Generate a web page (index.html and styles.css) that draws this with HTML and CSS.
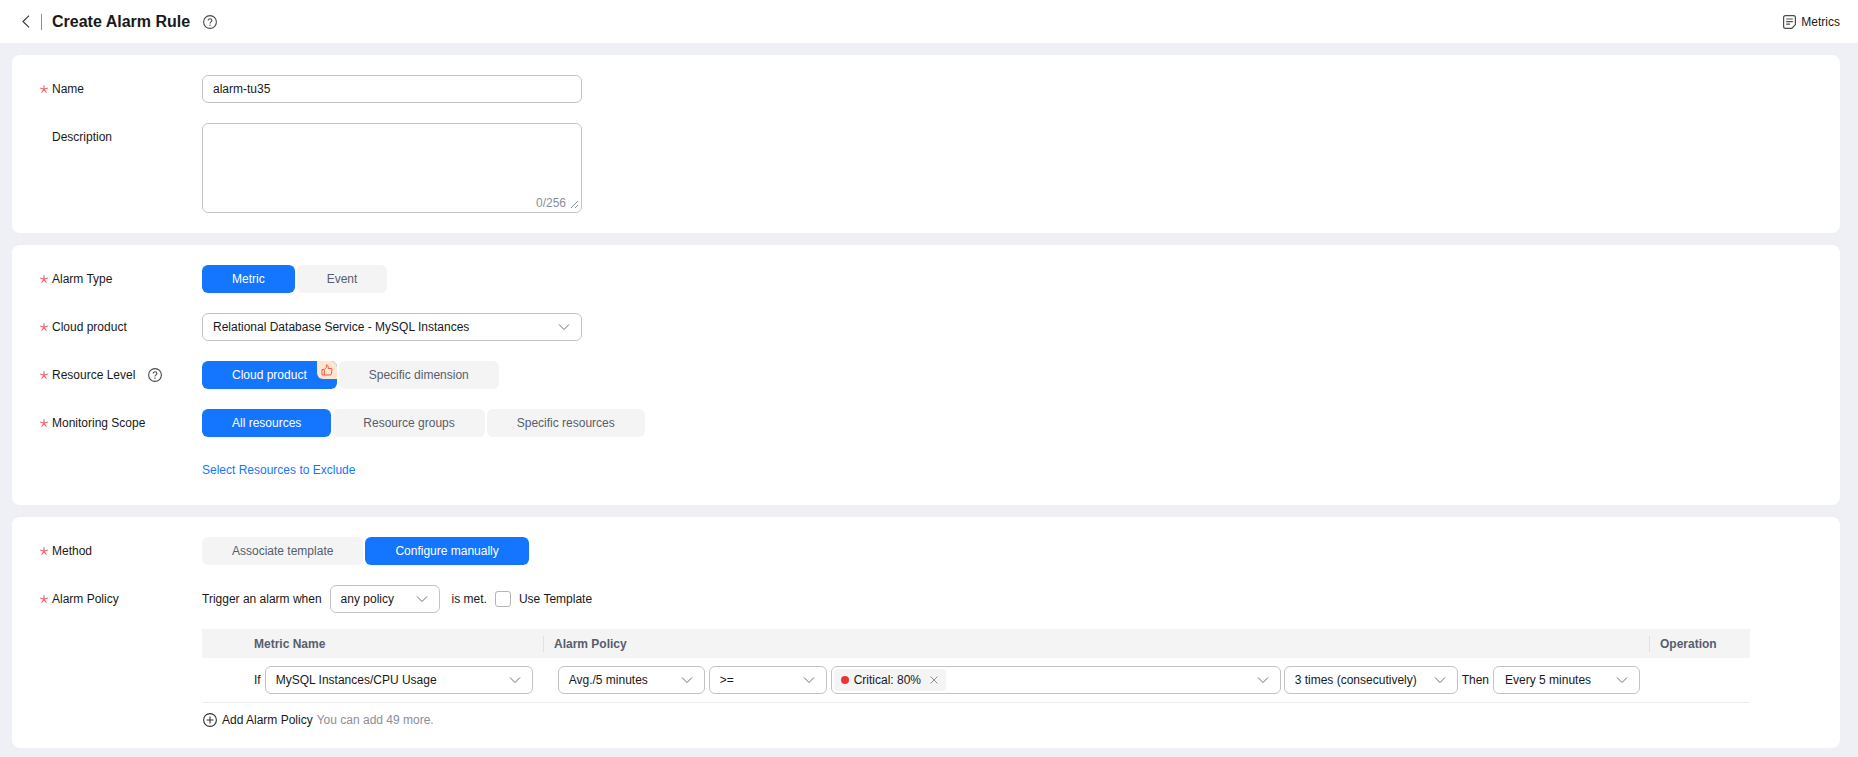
FILE: index.html
```html
<!DOCTYPE html>
<html lang="en">
<head>
    <meta charset="utf-8">
    <title>Create Alarm Rule</title>
    <link rel="stylesheet" href="styles.css">
</head>
<body>
    <svg class="defs" width="0" height="0">
        <symbol id="star" viewBox="0 0 8 8">
            <path d="M4 0.2V4.3M4 4.3L0.2 3.1M4 4.3L7.8 3.1M4 4.3L1.6 7.6M4 4.3L6.4 7.6" fill="none" stroke="currentColor" stroke-width="1.1"/>
        </symbol>
        <symbol id="chevron" viewBox="0 0 12 12">
            <path d="M1 3.5L6 8.5L11 3.5" fill="none" stroke="currentColor" stroke-width="1"/>
        </symbol>
        <symbol id="help" viewBox="0 0 14 14">
            <circle cx="7" cy="7" r="6.4" fill="none" stroke="currentColor" stroke-width="1.1"/>
            <path d="M5.1 5.6C5.1 4.5 5.9 3.8 7 3.8S8.9 4.5 8.9 5.5C8.9 6.9 7 6.9 7 8.5" fill="none" stroke="currentColor" stroke-width="1.1"/>
            <circle cx="7" cy="10.2" r="0.7" fill="currentColor"/>
        </symbol>
    </svg>

    <header class="topbar">
        <svg class="back" width="8" height="13" viewBox="0 0 8 13"><path d="M7 0.7L1 6.5L7 12.3" fill="none" stroke="currentColor" stroke-width="1.1"/></svg>
        <span class="topbar-line"></span>
        <h1>Create Alarm Rule</h1>
        <svg class="icon-help" width="14" height="14"><use href="#help"/></svg>
        <a class="metrics">
            <svg width="13" height="14" viewBox="0 0 13 14">
                <path d="M2.5 0.6H10.5A1.9 1.9 0 0 1 12.4 2.5V9.6L8.8 13.4H2.5A1.9 1.9 0 0 1 0.6 11.5V2.5A1.9 1.9 0 0 1 2.5 0.6Z" fill="none" stroke="currentColor" stroke-width="1.2"/>
                <path d="M3.2 4H9.8M3.2 6.6H9.8M3.2 9.2H7" fill="none" stroke="currentColor" stroke-width="1.2"/>
            </svg>
            Metrics
        </a>
    </header>

    <main class="content">
        <section class="card">
            <div class="row">
                <label class="label"><svg class="star"><use href="#star"/></svg>Name</label>
                <input class="input" type="text" value="alarm-tu35">
            </div>
            <div class="row">
                <label class="label label-top">Description</label>
                <div class="textarea-box">
                    <textarea class="textarea"></textarea>
                    <span class="counter">0/256</span>
                    <svg class="grip" width="9" height="9" viewBox="0 0 9 9"><path d="M1 8L8 1M5 8L8 5" fill="none" stroke="currentColor" stroke-width="1"/></svg>
                </div>
            </div>
        </section>

        <section class="card">
            <div class="row">
                <label class="label"><svg class="star"><use href="#star"/></svg>Alarm Type</label>
                <div class="tabs">
                    <span class="tab active">Metric</span>
                    <span class="tab">Event</span>
                </div>
            </div>
            <div class="row">
                <label class="label"><svg class="star"><use href="#star"/></svg>Cloud product</label>
                <div class="select w-form">Relational Database Service - MySQL Instances<svg class="chevron"><use href="#chevron"/></svg></div>
            </div>
            <div class="row">
                <label class="label"><svg class="star"><use href="#star"/></svg>Resource Level<svg class="icon-help label-help" width="14" height="14"><use href="#help"/></svg></label>
                <div class="tabs">
                    <span class="tab active has-badge">Cloud product
                        <span class="badge">
                            <svg width="12" height="12" viewBox="0 0 12 12"><path d="M1 5.5H3.3V11H1ZM3.3 5.5L5.4 3.4V0.9C6.6 0.9 7.2 1.8 7.2 2.8V4.5H10.3C10.9 4.5 11.2 5 11.1 5.5L10.2 10.2C10.1 10.7 9.8 11 9.3 11H3.3" fill="none" stroke="currentColor" stroke-width="1"/></svg>
                        </span>
                    </span>
                    <span class="tab">Specific dimension</span>
                </div>
            </div>
            <div class="row">
                <label class="label"><svg class="star"><use href="#star"/></svg>Monitoring Scope</label>
                <div class="tabs">
                    <span class="tab active">All resources</span>
                    <span class="tab">Resource groups</span>
                    <span class="tab">Specific resources</span>
                </div>
            </div>
            <div class="row">
                <span class="label"></span>
                <a class="link">Select Resources to Exclude</a>
            </div>
        </section>

        <section class="card">
            <div class="row">
                <label class="label"><svg class="star"><use href="#star"/></svg>Method</label>
                <div class="tabs">
                    <span class="tab">Associate template</span>
                    <span class="tab active">Configure manually</span>
                </div>
            </div>
            <div class="row row-policy">
                <label class="label label-policy"><svg class="star"><use href="#star"/></svg>Alarm Policy</label>
                <div class="policy">
                    <div class="trigger">
                        <span>Trigger an alarm when</span>
                        <div class="select w-any">any policy<svg class="chevron"><use href="#chevron"/></svg></div>
                        <span class="met">is met.</span>
                        <span class="checkbox"></span>
                        <span>Use Template</span>
                    </div>
                    <div class="table-head">
                        <span class="th th-metric">Metric Name</span>
                        <span class="th th-policy">Alarm Policy</span>
                        <span class="th th-op">Operation</span>
                    </div>
                    <div class="table-row">
                        <span class="word-if">If</span>
                        <div class="select w-metric">MySQL Instances/CPU Usage<svg class="chevron"><use href="#chevron"/></svg></div>
                        <div class="select w-avg">Avg./5 minutes<svg class="chevron"><use href="#chevron"/></svg></div>
                        <div class="select w-op">&gt;=<svg class="chevron"><use href="#chevron"/></svg></div>
                        <div class="select w-level">
                            <span class="chip"><i class="dot"></i>Critical: 80%
                                <svg class="chip-close" width="8" height="8" viewBox="0 0 8 8"><path d="M0.5 0.5L7.5 7.5M7.5 0.5L0.5 7.5" fill="none" stroke="currentColor" stroke-width="1"/></svg>
                            </span>
                            <svg class="chevron"><use href="#chevron"/></svg>
                        </div>
                        <div class="select w-times">3 times (consecutively)<svg class="chevron"><use href="#chevron"/></svg></div>
                        <span class="word-then">Then</span>
                        <div class="select w-every">Every 5 minutes<svg class="chevron"><use href="#chevron"/></svg></div>
                    </div>
                    <div class="add-row">
                        <svg width="14" height="14" viewBox="0 0 14 14"><circle cx="7" cy="7" r="6.4" fill="none" stroke="currentColor" stroke-width="1.1"/><path d="M3.6 7H10.4M7 3.6V10.4" fill="none" stroke="currentColor" stroke-width="1.1"/></svg>
                        <span>Add Alarm Policy</span>
                        <span class="muted">You can add 49 more.</span>
                    </div>
                </div>
            </div>
        </section>
    </main>
</body>
</html>
```

FILE: styles.css
```css
*{margin: 0;padding: 0;box-sizing: border-box;}
html,body{height: 100%;}
body{background: #eef0f5;color: #191919;font-family: "Liberation Sans", Arial, sans-serif;font-size: 12px;line-height: 16px;overflow: hidden;}
.defs{position: absolute;}

.topbar{height: 43px;background: #fff;display: flex;align-items: center;padding: 0 18px 0 22px;}
.back{color: #333;}
.topbar-line{width: 1px;height: 16px;background: #8a8e99;margin: 0 10px 0 11px;}
.topbar h1{font-size: 16px;line-height: 22px;font-weight: bold;}
.icon-help{color: #4c4c4c;flex: none;}
.topbar .icon-help{margin-left: 13px;}
.metrics{margin-left: auto;display: flex;align-items: center;gap: 5px;}
.metrics svg{color: #4c4c4c;}

.content{padding: 12px 18px 0 12px;display: flex;flex-direction: column;gap: 12px;}
.card{background: #fff;border-radius: 8px;padding: 20px 28px;display: flex;flex-direction: column;gap: 20px;}

.row{display: flex;align-items: center;min-height: 28px;}
.row-policy{align-items: flex-start;margin-top: 0;}
.label{width: 162px;flex: none;padding-left: 12px;position: relative;display: flex;align-items: center;}
.label-top{align-self: flex-start;line-height: 28px;}
.label-policy{height: 28px;}
.label-help{margin-left: 13px;}
.star{position: absolute;left: 0;top: 50%;margin-top: -4px;width: 8px;height: 8px;color: #f66066;}

.input{width: 380px;height: 28px;border: 1px solid #c3c3c3;border-radius: 6px;padding: 0 10px;font: 12px "Liberation Sans", Arial, sans-serif;color: #191919;outline: none;}
.textarea-box{width: 380px;height: 90px;position: relative;}
.textarea{display: block;width: 100%;height: 100%;border: 1px solid #c3c3c3;border-radius: 6px;padding: 5px 10px;resize: none;outline: none;font: 12px "Liberation Sans", Arial, sans-serif;}
.counter{position: absolute;right: 16px;bottom: 2px;color: #8a8e99;}
.grip{position: absolute;right: 3px;bottom: 4px;color: #8a8e99;}

.tabs{display: flex;gap: 2px;}
.tab{height: 28px;line-height: 28px;padding: 0 30px;border-radius: 6px;background: #f4f4f4;color: #575d6c;white-space: nowrap;}
.tab.active{background: #1476ff;color: #fff;}
.has-badge{position: relative;}
.badge{position: absolute;top: 0;right: 0;width: 20px;height: 18px;background: #ffe6cf;color: #f0564f;border-radius: 0 6px 0 6px;display: flex;align-items: center;justify-content: center;}
.link{color: #1476ff;padding-bottom: 2px;}

.select{height: 28px;border: 1px solid #c3c3c3;border-radius: 6px;padding: 0 10px;display: flex;align-items: center;background: #fff;white-space: nowrap;flex: none;}
.chevron{width: 12px;height: 12px;margin-left: auto;margin-right: 1px;color: #6a6e77;flex: none;}
.w-form{width: 380px;}
.w-any{width: 110px;margin: 0 12px 0 8px;}
.w-metric{width: 268px;margin: 0 25px 0 4px;}
.w-avg{width: 147px;margin-right: 4px;}
.w-op{width: 118px;margin-right: 4px;}
.w-level{width: 450px;margin-right: 3px;padding-left: 2px;}
.w-times{width: 174px;}
.w-every{width: 147px;padding-left: 11px;}

.policy{width: 1548px;}
.trigger{display: flex;align-items: center;height: 28px;}
.met{margin-right: 8px;}
.checkbox{width: 16px;height: 16px;border: 1px solid #b5b5b5;border-radius: 3px;margin-right: 8px;background: #fff;}

.table-head{margin-top: 16px;height: 29px;background: #f4f4f4;display: flex;align-items: center;padding-left: 52px;}
.th{font-weight: bold;color: #575d6c;white-space: nowrap;}
.th-metric{width: 289px;}
.th-policy{width: 1106px;border-left: 1px solid #dfe1e6;padding-left: 10px;line-height: 16px;}
.th-op{border-left: 1px solid #dfe1e6;padding-left: 10px;}
.table-row{height: 45px;border-bottom: 1px solid #eeeeee;display: flex;align-items: center;padding: 0 0 0 52px;}
.word-then{margin: 0 4px;}

.chip{height: 22px;width: 112px;background: #f4f4f4;border-radius: 4px;display: flex;align-items: center;padding-left: 7px;}
.dot{width: 8px;height: 8px;border-radius: 50%;background: #ee3338;margin-right: 5px;}
.chip-close{color: #8a8e99;margin-left: 9px;}

.add-row{margin-top: 9px;height: 16px;display: flex;align-items: center;gap: 5px;padding-left: 1px;}
.add-row svg{color: #333;}
.muted{color: #8a8e99;margin-left: -1px;}
```
